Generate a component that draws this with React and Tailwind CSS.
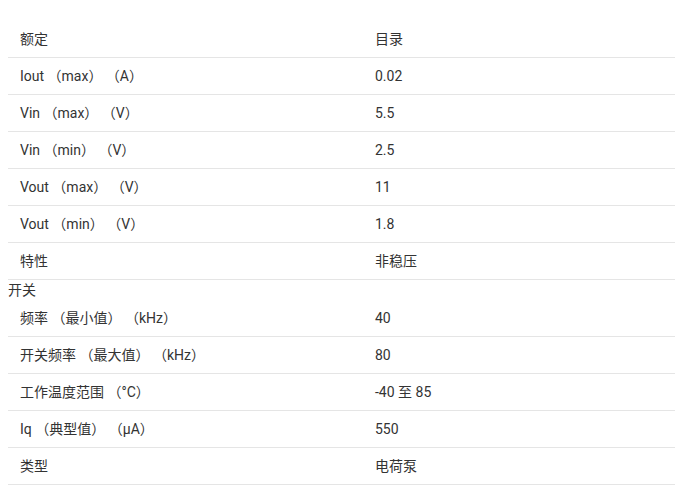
// 参数表：额定值 / 开关特性
import React from 'react';

const top = [
  ['额定', '目录'],
  ['Iout （max） （A）', '0.02'],
  ['Vin （max） （V）', '5.5'],
  ['Vin （min） （V）', '2.5'],
  ['Vout （max） （V）', '11'],
  ['Vout （min） （V）', '1.8'],
  ['特性', '非稳压'],
];

const bottom = [
  ['频率 （最小值） （kHz）', '40'],
  ['开关频率 （最大值） （kHz）', '80'],
  ['工作温度范围 （°C）', '-40 至 85'],
  ['Iq （典型值） （µA）', '550'],
  ['类型', '电荷泵'],
];

function Row({ label, value }) {
  return (
    <div className="flex items-center h-[37px] border-b border-[#e5e5e5]">
      <div className="w-[355px] px-3 whitespace-pre">{label}</div>
      <div className="flex-1 px-3 whitespace-pre">{value}</div>
    </div>
  );
}

export default function App() {
  return (
    <div
      className="bg-white w-[687px] h-[485px] overflow-hidden pt-[21px] px-2 text-[14px] text-[#333333]"
      style={{ fontFamily: 'Roboto, "Noto Sans CJK SC", sans-serif' }}
    >
      <div className="w-[667px]">
        {top.map(([l, v]) => (
          <Row key={l} label={l} value={v} />
        ))}
        <div className="h-[20px] flex items-center leading-[20px]">开关</div>
        {bottom.map(([l, v]) => (
          <Row key={l} label={l} value={v} />
        ))}
      </div>
    </div>
  );
}
